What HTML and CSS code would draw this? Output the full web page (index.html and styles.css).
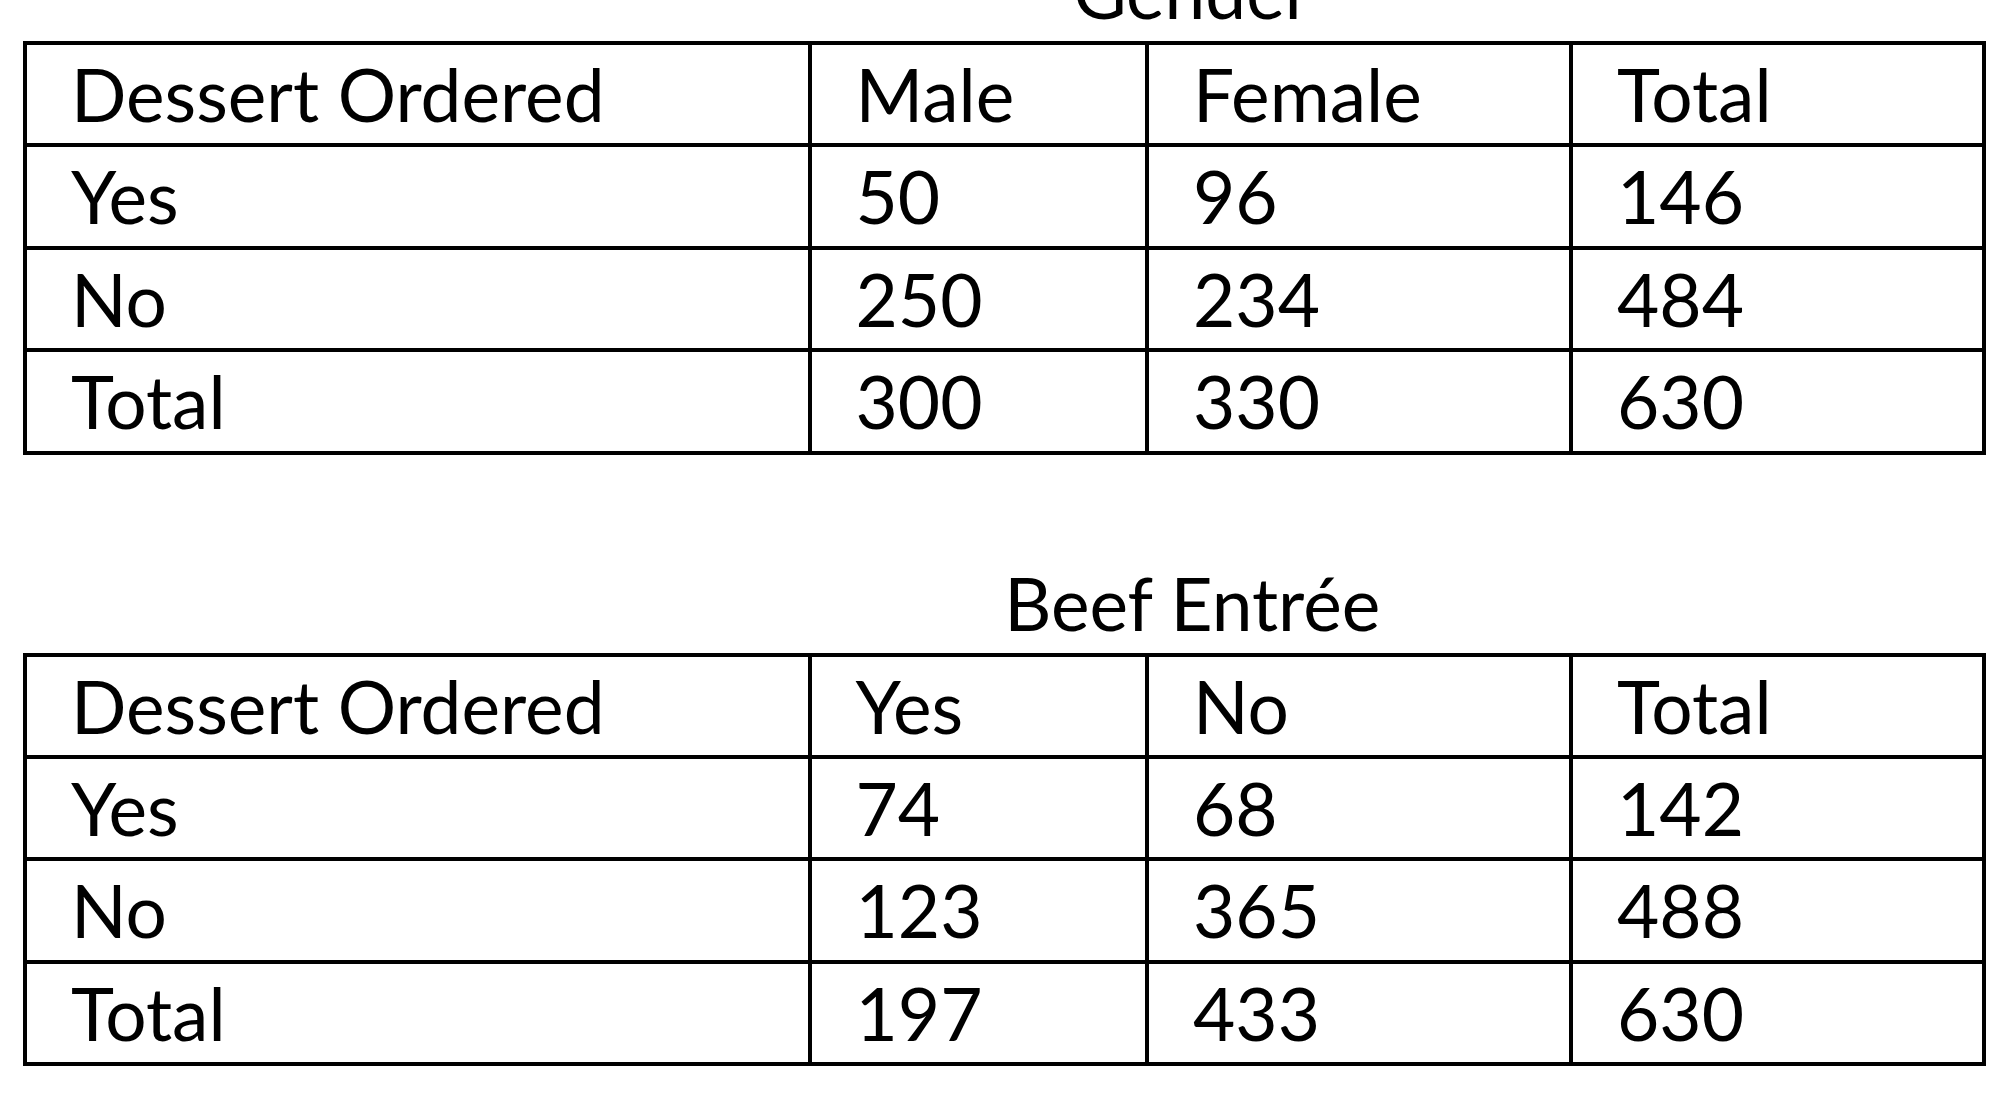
FILE: index.html
```html
<!DOCTYPE html>
<html lang="en">
<head>
<meta charset="utf-8">
<title>Dessert Ordered contingency tables</title>
<link rel="stylesheet" href="styles.css">
</head>
<body>
<main class="page">
  <section class="block block-first">
    <div class="caption-row"><div class="caption">Gender</div></div>
    <div class="grid-table">
      <div class="cell">Dessert Ordered</div>
      <div class="cell">Male</div>
      <div class="cell">Female</div>
      <div class="cell">Total</div>
      <div class="cell">Yes</div>
      <div class="cell">50</div>
      <div class="cell">96</div>
      <div class="cell">146</div>
      <div class="cell">No</div>
      <div class="cell">250</div>
      <div class="cell">234</div>
      <div class="cell">484</div>
      <div class="cell">Total</div>
      <div class="cell">300</div>
      <div class="cell">330</div>
      <div class="cell">630</div>
    </div>
  </section>
  <section class="block block-second">
    <div class="caption-row"><div class="caption">Beef Entrée</div></div>
    <div class="grid-table">
      <div class="cell">Dessert Ordered</div>
      <div class="cell">Yes</div>
      <div class="cell">No</div>
      <div class="cell">Total</div>
      <div class="cell">Yes</div>
      <div class="cell">74</div>
      <div class="cell">68</div>
      <div class="cell">142</div>
      <div class="cell">No</div>
      <div class="cell">123</div>
      <div class="cell">365</div>
      <div class="cell">488</div>
      <div class="cell">Total</div>
      <div class="cell">197</div>
      <div class="cell">433</div>
      <div class="cell">630</div>
    </div>
  </section>
</main>
</body>
</html>
```

FILE: styles.css
```css
html, body {
  margin: 0;
  padding: 0;
  background: #ffffff;
}

body {
  width: 2009px;
  height: 1096px;
  overflow: hidden;
  font-family: "Lato", "Liberation Sans", sans-serif;
  color: #000000;
}

.page {
  padding: 0 23px;
}

.block-first {
  margin-top: -45px;
}

.block-second {
  margin-top: 112px;
}

.caption-row {
  display: grid;
  grid-template-columns: 784.5px 337.5px 424px 413px;
  padding-left: 4px;
  margin-bottom: 13px;
}

.caption {
  grid-column: 2 / 4;
  text-align: center;
  font-size: 73px;
  line-height: 73px;
  height: 73px;
  white-space: nowrap;
}

.grid-table {
  display: grid;
  grid-template-columns: 784.5px 337.5px 424px 413px;
  grid-auto-rows: 102.4px;
  width: max-content;
  border-left: 4px solid #000;
  border-top: 4px solid #000;
}

.cell {
  box-sizing: border-box;
  border-right: 4px solid #000;
  border-bottom: 4px solid #000;
  padding: 13px 0 0 44px;
  font-size: 73px;
  line-height: 73px;
  white-space: nowrap;
}
```
